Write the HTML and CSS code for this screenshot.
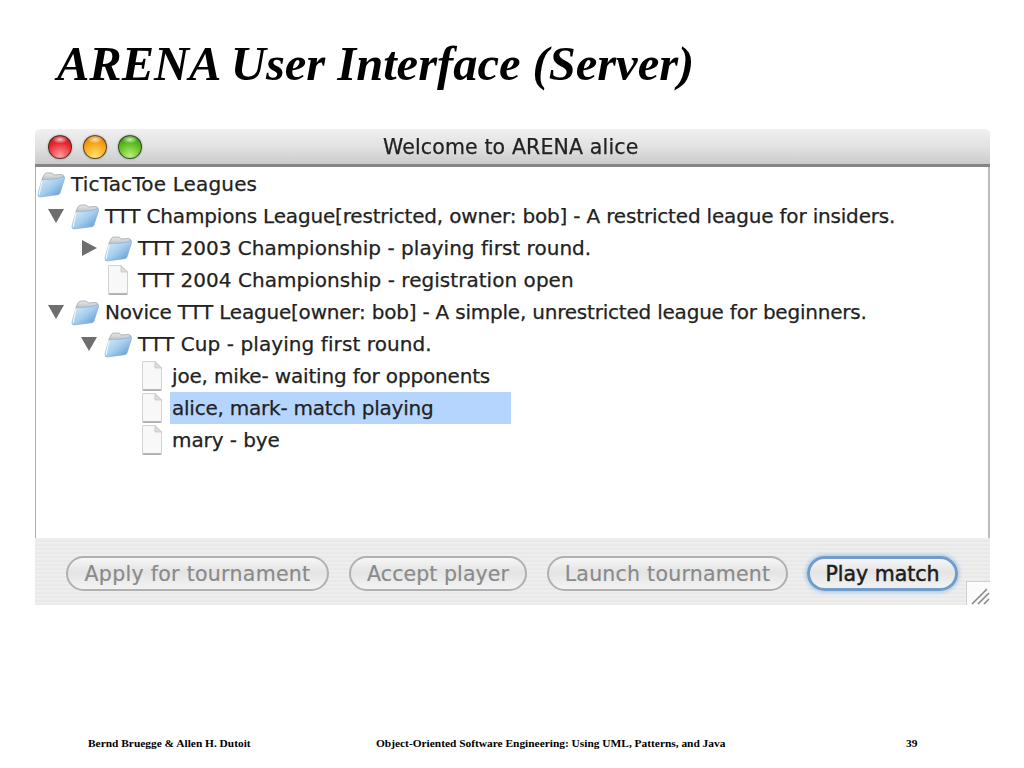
FILE: index.html
```html
<!DOCTYPE html>
<html lang="en">
<head>
<meta charset="utf-8">
<title>ARENA User Interface (Server)</title>
<link rel="stylesheet" href="styles.css">
</head>
<body>
<svg class="defs" width="0" height="0" aria-hidden="true">
  <defs>
    <linearGradient id="fb" x1="0" y1="0" x2="1" y2="1">
      <stop offset="0" stop-color="#e2eef8"/>
      <stop offset=".5" stop-color="#a5cdee"/>
      <stop offset="1" stop-color="#4f93d3"/>
    </linearGradient>
    <linearGradient id="fk" x1="0" y1="0" x2="0" y2="1">
      <stop offset="0" stop-color="#e6e8ea"/>
      <stop offset="1" stop-color="#aeb6bd"/>
    </linearGradient>
    <symbol id="folder" viewBox="0 0 28 28">
      <path d="M5 9 L7 5 Q8 3 10 3 L14 3 Q16 3 17 5 L24 4.500 Q27 4.500 27 7 L25 12 L6 12 Z" fill="url(#fk)" stroke="#a0a8af" stroke-width=".8"/>
      <path d="M5 9.500 Q14 9.500 21 8.500 L27 6.500 Q28 7 27.500 9 L23 23 Q22.500 24.500 21 24.700 L3 27 Q0.500 27 1 24 Z" fill="url(#fb)" stroke="#86a9c8" stroke-width=".6"/>
      <path d="M5 10.500 L2 25" stroke="#eef5fb" stroke-width="1.200" fill="none"/>
    </symbol>
    <symbol id="doc" viewBox="0 0 22 32">
      <path d="M1.500 1.500 H14 L20.500 8 V30.500 H1.500 Z" fill="#f8f8f8" stroke="#d2d2d2"/>
      <path d="M14 1.500 V8 H20.500 Z" fill="#dedede" stroke="#c4c4c4" stroke-width=".8"/>
      <path d="M2 30 H20" stroke="#a3a3a3" stroke-width="1.500"/>
    </symbol>
  </defs>
</svg>

<h1 class="title">ARENA User Interface (Server)</h1>

<section class="window">
  <header class="titlebar">
    <div class="lights">
      <span class="light red"></span>
      <span class="light amber"></span>
      <span class="light green"></span>
    </div>
    <span class="window-title">Welcome to ARENA alice</span>
  </header>

  <div class="tree">
    <div class="row lvl0">
      <svg class="folder"><use href="#folder"/></svg>
      <span class="label sp-root">TicTacToe Leagues</span>
    </div>
    <div class="row lvl1">
      <span class="arrow down"></span>
      <svg class="folder"><use href="#folder"/></svg>
      <span class="label sp-champ">TTT Champions League[restricted, owner: bob] - A restricted league for insiders.</span>
    </div>
    <div class="row lvl2">
      <span class="arrow right"></span>
      <svg class="folder"><use href="#folder"/></svg>
      <span class="label sp-2003">TTT 2003 Championship - playing first round.</span>
    </div>
    <div class="row lvl2 no-arrow">
      <svg class="doc"><use href="#doc"/></svg>
      <span class="label sp-2004">TTT 2004 Championship - registration open</span>
    </div>
    <div class="row lvl1">
      <span class="arrow down"></span>
      <svg class="folder"><use href="#folder"/></svg>
      <span class="label sp-novice">Novice TTT League[owner: bob] - A simple, unrestricted league for beginners.</span>
    </div>
    <div class="row lvl2">
      <span class="arrow down"></span>
      <svg class="folder"><use href="#folder"/></svg>
      <span class="label sp-cup">TTT Cup - playing first round.</span>
    </div>
    <div class="row lvl3">
      <svg class="doc"><use href="#doc"/></svg>
      <span class="label sp-joe">joe, mike- waiting for opponents</span>
    </div>
    <div class="row lvl3">
      <svg class="doc"><use href="#doc"/></svg>
      <span class="label selected sp-alice">alice, mark- match playing</span>
    </div>
    <div class="row lvl3">
      <svg class="doc"><use href="#doc"/></svg>
      <span class="label">mary - bye</span>
    </div>
  </div>

  <div class="actions">
    <button class="btn w-apply" disabled>Apply for tournament</button>
    <button class="btn w-accept" disabled>Accept player</button>
    <button class="btn w-launch" disabled>Launch tournament</button>
    <button class="btn primary w-play">Play match</button>
    <div class="grip">
      <svg width="24" height="24" viewBox="0 0 24 24"><path d="M5 22 L20 7 M11 22 L22 11 M17 22 L22 17" stroke="#8a8a8a" stroke-width="1.600" fill="none"/></svg>
    </div>
  </div>
</section>

<footer class="footer">
  <span class="f-left">Bernd Bruegge &amp; Allen H. Dutoit</span>
  <span class="f-mid">Object-Oriented Software Engineering: Using UML, Patterns, and Java</span>
  <span class="f-right">39</span>
</footer>
</body>
</html>
```
FILE: styles.css
```css
* { box-sizing: border-box; }
html, body { margin: 0; padding: 0; }
body {
  width: 1024px;
  height: 768px;
  background: #fff;
  overflow: hidden;
  display: flex;
  flex-direction: column;
}
.defs { position: absolute; }

.title {
  margin: 0;
  height: 129px;
  padding: 34px 0 0 57px;
  font: italic bold 48.500px/60px "Liberation Serif", serif;
  color: #000;
}

.window {
  width: 955px;
  height: 476px;
  margin-left: 35px;
  display: flex;
  flex-direction: column;
  font-family: "DejaVu Sans", sans-serif;
  filter: blur(.45px);
}

.titlebar {
  height: 38px;
  flex: none;
  display: flex;
  align-items: center;
  position: relative;
  background: linear-gradient(#f0f0f0, #e2e2e2 50%, #cbcbcb);
  border-bottom: 3px solid #858585;
  border-radius: 5px 5px 0 0;
}
.lights { display: flex; gap: 12px; padding-left: 13px; }
.light {
  width: 24px;
  height: 24px;
  margin-right: -1px;
  border-radius: 50%;
  border: 1.500px solid rgba(40, 40, 40, .75);
  box-shadow: 0 0 2px rgba(90, 90, 90, .6);
}
.red { background: radial-gradient(ellipse 35% 18% at 50% 16%, #f3c9c9, transparent), radial-gradient(circle at 50% 90%, #ff9c9c, #e8262c 60%, #a31a1e); }
.amber { background: radial-gradient(ellipse 35% 18% at 50% 16%, #fbe6bd, transparent), radial-gradient(circle at 50% 90%, #ffe36a, #f79f12 60%, #c0700f); }
.green { background: radial-gradient(ellipse 35% 18% at 50% 16%, #d2efbb, transparent), radial-gradient(circle at 50% 90%, #b6f078, #58b81a 60%, #2f8012); }
.window-title {
  position: absolute;
  left: 348px;
  top: 4px;
  font-size: 20.500px;
  line-height: 28px;
  letter-spacing: .14px;
  color: #222;
  -webkit-text-stroke: .25px #222;
  white-space: nowrap;
}

.tree {
  height: 371px;
  flex: none;
  padding-top: 1px;
  background: #fff;
  border-left: 1px solid #b0b0b0;
  border-right: 2px solid #bcbcbc;
}
.row {
  height: 32px;
  display: flex;
  align-items: center;
  font-size: 20px;
  letter-spacing: -.08px;
  color: #222;
  -webkit-text-stroke: .25px #222;
  white-space: nowrap;
}
.sp-root { letter-spacing: .16px; }
.sp-champ { letter-spacing: -.18px; }
.sp-2003 { letter-spacing: .03px; }
.sp-2004 { letter-spacing: .04px; }
.sp-novice { letter-spacing: -.21px; }
.sp-cup { letter-spacing: .09px; }
.sp-joe { letter-spacing: -.17px; }
.sp-alice { letter-spacing: -.23px; }

.lvl0 { padding-left: 2px; }
.lvl1 { padding-left: 12px; }
.lvl2 { padding-left: 45px; }
.no-arrow { padding-left: 71px; }
.lvl3 { padding-left: 105px; }

.arrow { width: 24px; flex: none; height: 16px; position: relative; }
.arrow.down::before {
  content: "";
  position: absolute;
  left: 0;
  top: 1px;
  border-left: 8px solid transparent;
  border-right: 8px solid transparent;
  border-top: 14px solid #6e6e6e;
}
.arrow.right::before {
  content: "";
  position: absolute;
  left: 1px;
  top: 0;
  border-top: 8px solid transparent;
  border-bottom: 8px solid transparent;
  border-left: 15px solid #6e6e6e;
}
.folder { width: 28px; height: 28px; flex: none; margin-right: 6px; margin-left: -1px; }
.doc { width: 22px; height: 32px; flex: none; margin-right: 9px; }
.label { line-height: 32px; }
.selected {
  width: 341px;
  margin-left: -2px;
  padding-left: 2px;
  background: #b5d5fe;
}

.actions {
  height: 67px;
  flex: none;
  display: flex;
  align-items: flex-start;
  padding: 18px 0 0 31px;
  gap: 20px;
  position: relative;
  background: repeating-linear-gradient(#eeeeee 0 2px, #e9e9e9 2px 4px);
}
.btn {
  height: 35px;
  padding: 0;
  border: 2px solid #b0b0b0;
  border-radius: 18px;
  background: linear-gradient(#f6f6f6, #e4e4e4 45%, #f3f3f3);
  font-family: "DejaVu Sans", sans-serif;
  font-size: 20.500px;
  color: #8a8a8a;
  -webkit-text-stroke: .2px #8a8a8a;
}
.w-apply { width: 263px; letter-spacing: .3px; }
.w-accept { width: 178px; letter-spacing: .08px; }
.w-launch { width: 241px; letter-spacing: .24px; }
.w-play { width: 151px; }
.primary {
  margin-left: -1px;
  border: 3px solid #6f9ccb;
  color: #1d1d1d;
  -webkit-text-stroke: .5px #1d1d1d;
  box-shadow: 0 0 4px 1px #9cc2e6;
}
.grip {
  position: absolute;
  right: 0;
  bottom: 0;
  width: 24px;
  height: 24px;
  background: #fbfbfb;
  border-left: 1px solid #d0d0d0;
  border-top: 1px solid #d0d0d0;
}
.grip svg { display: block; }

.footer {
  margin-top: 130px;
  height: 20px;
  display: flex;
  font: bold 11.400px/16px "Liberation Serif", serif;
  color: #000;
}
.f-left { margin-left: 88px; width: 288px; }
.f-mid { width: 530px; }
```
